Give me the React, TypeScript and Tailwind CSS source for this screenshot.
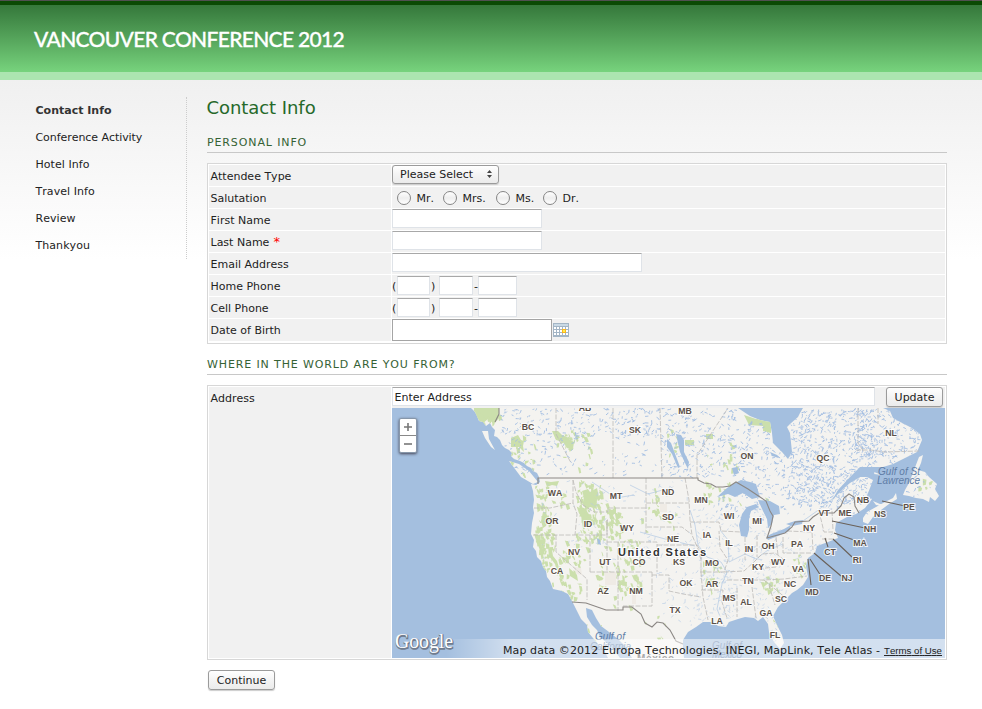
import React from 'react';

const NAV = ['Contact Info', 'Conference Activity', 'Hotel Info', 'Travel Info', 'Review', 'Thankyou'];

// Small deterministic generator for the scatter of lakes and streams.
function makeRandom(seed: number) {
  let s = seed;
  return () => {
    s = (s * 16807) % 2147483647;
    return s / 2147483647;
  };
}

type Box = [number, number, number, number, number];

function streaks(boxes: Box[], seed: number, len: number) {
  const r = makeRandom(seed);
  let d = '';
  for (const [x0, y0, x1, y1, n] of boxes) {
    for (let i = 0; i < n; i++) {
      const x = x0 + r() * (x1 - x0);
      const y = y0 + r() * (y1 - y0);
      const a = -1.7 + r() * 2.6;
      const l = 0.8 + r() * len;
      const dx = Math.cos(a) * l;
      const dy = Math.sin(a) * l;
      d += `M${x.toFixed(1)} ${y.toFixed(1)}q${(dx * 0.7).toFixed(1)} ${(dy * 0.2).toFixed(1)} ${dx.toFixed(1)} ${dy.toFixed(1)}`;
    }
  }
  return d;
}

function patches(boxes: Box[], seed: number) {
  const r = makeRandom(seed);
  let d = '';
  for (const [x0, y0, x1, y1, n] of boxes) {
    for (let i = 0; i < n; i++) {
      const x = x0 + r() * (x1 - x0);
      const y = y0 + r() * (y1 - y0);
      const w = 1 + r() * 3;
      const h = 1 + r() * 4;
      d += `M${x.toFixed(1)} ${y.toFixed(1)}l${w.toFixed(1)} ${(r() * 3 - 1).toFixed(1)}l${(r() * 3 - 1).toFixed(1)} ${h.toFixed(1)}l${(-w * 0.8).toFixed(1)} ${(r() * 2).toFixed(1)}z`;
    }
  }
  return d;
}

const LAND =
  'M471 408L475 412 477 416 479 421 483 422 486 426 490 423 492 427 495 430 494 436 497 437 500 440 502 445 505 448 509 450 512 453 511 456 514 459 520 461 524 463 527 466 531 468 533 471 537 473 539 477 540 482 536 485 531 484 533 491 534 500 533 507 534 513 532 523 531 534 534 540 533 547 536 551 537 557 541 561 543 567 546 571 547 577 550 581 553 589 562 591 568 594 572 601 577 611 581 619 587 625 588 632 597 643 604 650 608 658 620 658 614 650 607 643 600 637 597 630 592 625 587 617 586 608 592 610 596 618 601 626 609 632 618 639 625 646 632 658 684 658 683 648 683 640 688 632 696 627 703 622 713 622 718 626 726 627 729 622 738 619 745 617 754 618 758 621 763 617 768 624 769 632 774 642 780 649 784 643 782 635 777 625 773 616 778 607 787 598 792 593 797 590 803 585 808 577 806 566 808 558 815 553 817 546 828 542 838 538 835 530 836 523 847 517 856 514 865 508 872 499 867 496 870 488 873 480 867 477 860 477 850 483 843 489 837 495 831 502 838 490 850 477 860 467 883 467 893 464 905 458 917 452 922 440 920 434 912 428 904 424 893 418 890 411 883 408 803 408 800 413 798 417 790 424 787 427 790 433 792 452 788 459 782 452 773 443 772 433 770 422 760 420 750 416 738 408Z';

const ISLANDS =
  'M482 431l6 0 1 8 6 11 -4 -3 -6 -9zM509 461l10 3 10 7 9 11 -5 2 -12 -7zM863 518l4 -6 9 -5 9 -5 8 -4 3 -5 1 6 -8 5 -8 6 -8 7 -5 7 -5 -2zM919 457l4 -2 -2 8 -3 7 7 2 4 5 8 7 -2 5 4 7 -4 5 -5 -4 -1 5 -6 -3 -7 -1 -7 -2 -6 -1 2 -5 4 -7zM873 501l7 3 8 -1 -5 3 -7 -1zM770 452l7 3 2 3 -7 -2zM874 472l8 3 -8 -1z';

const LAKES =
  'M717 497L727 488 735 483 741 480 750 482 756 484 760 497 752 499 743 493 735 497 728 494ZM741 536L739 525 742 514 747 507 756 504 759 507 751 511 749 518 749 530 747 537ZM758 500L770 501 779 506 780 514 774 515 772 524 768 528 767 519 763 511ZM766 537L771 534 784 529 791 525 789 531 778 536 768 540ZM786 524L795 521 803 520 802 524 792 526ZM676 434l5 1 3 5 0 12 5 10 -1 7 -3 -6 -5 -11zM667 439l4 4 3 8 6 16 -2 1 -6 -14 -5 -7zM732 468l5 -1 2 6 -5 2zM597 538l3 2 1 5 -3 -1z';

const GREENS =
  'M474 408h25v10l-5 6 -6 -5 -6 5 -8 -9zM552 431l6 0 4 4 5 2 6 6 0 7 -6 -2 -4 -6 -7 -2zM511 438l7 -3 3 5 3 1 -1 5 1 6 -5 -5 -8 0zM744 415l12 4 8 -3 7 5v12l-8 -2 0 -5 -14 -1zM685 440h9v5h-9zM706 434h7v5h-7zM545 481l6 1 8 -1 -2 5 -5 -1 -5 2zM543 512l3 0 2 8 -2 6 -3 2 -2 -7zM534 534l6 1 2 12 3 7 -3 1 -5 -12zM548 547l4 3 1 6 4 5 2 7 5 8 -1 4 -6 -8 -2 -8 -6 -8zM569 568l8 7 1 6 -8 -5zM582 491l6 -2 2 3 7 -4 2 9 -3 4 1 8 -7 -2 -4 3 -3 -8 1 -5zM579 506l7 3 3 6 4 6 -4 5 -6 -2 -2 -10zM608 508l4 2 4 -3 0 6 -3 2 2 5 -5 -1zM706 579l9 -1 -1 4 -4 0 -5 3zM562 435l12 7 -1 7 -5 -1 -4 -6z';

const greenScatter = patches(
  [
    [475, 409, 498, 422, 14], [505, 434, 535, 474, 24], [550, 430, 575, 450, 14],
    [560, 430, 590, 470, 18], [556, 490, 570, 505, 9], [575, 480, 602, 540, 85],
    [605, 503, 622, 535, 32], [535, 485, 552, 542, 62], [534, 537, 550, 570, 26],
    [548, 545, 568, 592, 28], [561, 540, 580, 590, 13], [592, 535, 640, 590, 62],
    [556, 590, 580, 598, 12], [612, 559, 640, 605, 26], [646, 488, 658, 512, 11],
    [700, 480, 742, 502, 24], [700, 555, 720, 590, 14], [757, 577, 776, 590, 15],
    [790, 550, 807, 573, 13], [640, 510, 675, 530, 7], [570, 535, 600, 560, 9],
    [665, 425, 680, 465, 10], [700, 442, 736, 470, 12], [765, 495, 773, 510, 5],
    [918, 478, 934, 490, 6], [763, 610, 778, 645, 6], [580, 618, 600, 640, 5], [640, 610, 665, 640, 5],
  ],
  71,
);

const denseLakes = streaks(
  [
    [500, 409, 575, 475, 160], [570, 408, 662, 438, 140], [580, 435, 660, 476, 38],
    [660, 408, 735, 477, 230], [735, 422, 790, 500, 170], [790, 410, 875, 505, 680],
    [855, 410, 920, 463, 230], [780, 462, 835, 515, 100], [715, 495, 770, 520, 45],
    [835, 500, 870, 515, 26], [905, 465, 940, 500, 28],
  ],
  913,
  3.2,
);

const southLakes = streaks(
  [
    [540, 480, 700, 560, 120], [695, 500, 770, 620, 220], [755, 530, 835, 610, 150],
    [660, 575, 735, 628, 80], [640, 540, 700, 600, 45], [760, 600, 785, 648, 18],
  ],
  4441,
  3,
);

const STATES =
  'M556 408V434L571 463M613 408V478M660 408L662 478M697 478V455L728 408M534 508H550L573 503M533 535H594M556 535V552L587 579V600M573 480V503L577 514 575 535M573 480L576 492 583 505 594 512H608V508H647M594 535H607V520H608M607 520V572M590 572H652M590 535V572M646 478V533M607 542H657V572M646 503H689M647 527H682L691 534M685 478L689 500 690 520 692 535 698 549 701 560M690 522H719L721 531 741 532M657 545H697L701 552V572M618 542V611M652 572V606H623M652 575H669V591L683 594 701 597M701 572L703 597 708 620M700 572H724L728 560 720 548 719 531M701 590H723L722 602 727 618M737 588V617M752 587L756 618M724 572L744 571 755 561 762 554 775 553 783 559 776 567 756 569M745 537V560M757 535V557M776 537L778 555M727 580H764L784 579 807 576M764 580L775 589 787 599M769 585L775 605M783 537V553H812M787 531L812 532 813 550M819 511L824 532 833 532M832 511L833 530M822 539H833M856 450H871L884 452 919 451M858 408V443L864 452M878 408V424';

const LABELS: [string, number, number][] = [
  ['BC', 528, 430], ['AB', 585, 411], ['SK', 635, 433], ['MB', 685, 414], ['ON', 747, 459],
  ['QC', 823, 461], ['NL', 891, 436], ['WA', 555, 496], ['MT', 616, 499], ['ND', 668, 495],
  ['MN', 701, 503], ['OR', 552, 524], ['ID', 588, 527], ['WY', 627, 531], ['SD', 668, 520],
  ['WI', 729, 519], ['MI', 757, 524], ['NV', 574, 555], ['UT', 605, 565], ['CO', 639, 565],
  ['NE', 673, 542], ['KS', 679, 565], ['IA', 707, 538], ['IL', 729, 546], ['IN', 749, 552],
  ['OH', 768, 549], ['MO', 712, 566], ['KY', 758, 570], ['WV', 778, 565], ['PA', 797, 547],
  ['NY', 809, 531], ['VT', 824, 516], ['ME', 845, 516], ['NB', 863, 503], ['NS', 880, 517],
  ['PE', 909, 510], ['NH', 870, 532], ['MA', 860, 546], ['RI', 857, 563], ['CT', 830, 555],
  ['NJ', 847, 581], ['DE', 825, 581], ['MD', 812, 595], ['VA', 798, 572], ['CA', 557, 574],
  ['AZ', 603, 594], ['NM', 636, 594], ['OK', 686, 586], ['AR', 712, 587], ['TN', 748, 584],
  ['NC', 790, 587], ['SC', 781, 602], ['MS', 729, 601], ['AL', 746, 605], ['GA', 766, 616],
  ['TX', 675, 613], ['LA', 717, 624], ['FL', 775, 638],
];

function MapCanvas() {
  return (
    <svg viewBox="392 408 553 250" className="block h-[250px] w-[553px]">
      <defs>
        <clipPath id="land"><path d={LAND + ISLANDS} /></clipPath>
        <linearGradient id="credit" x1="0" x2="1" y1="0" y2="0">
          <stop offset="0" stopColor="#fff" stopOpacity="0" />
          <stop offset="0.13" stopColor="#fff" stopOpacity="0.5" />
          <stop offset="1" stopColor="#fff" stopOpacity="0.52" />
        </linearGradient>
      </defs>
      <rect x="392" y="408" width="553" height="250" fill="#a4bfdf" />
      <path d={LAND + ISLANDS} fill="#f4f3f0" />
      <g clipPath="url(#land)">
        <path d={GREENS} fill="#cbdfac" />
        <path d={greenScatter} fill="#cbdfac" />
        <path d="M605 572h11v13h-11zM574 567l7 1 1 7 -6 -1zM632 593l4 1 0 10 -4 0zM660 504h7v8h-7z" fill="#efebe5" />
        <path d={denseLakes} fill="none" stroke="#a4bfe3" strokeWidth="0.95" />
        <path d={southLakes} fill="none" stroke="#b5cbe6" strokeWidth="0.6" />
        <path
          d="M690 510l5 15 3 20 9 12 14 5 6 10 -5 12 -3 15 -2 10 7 17M729 562l16 -8 11 5 12 -9 15 -6M720 530l8 10 1 22M630 485l18 9 22 -6M592 482l24 16 18 -3M640 532l25 7 30 7M837 495l-20 16 -14 10"
          fill="none" stroke="#b1c8e4" strokeWidth="0.7"
        />
      </g>
      <path d={LAKES} fill="#a4bfdf" />
      <path d={STATES} fill="none" stroke="#bcbab7" strokeWidth="0.8" strokeDasharray="5 1.5" />
      <path
        d="M499 408v6l-4 8M538 484v-6H698v2l6 3 7 1 5 3 7 0 7 -1 6 -4 12 7 12 8 6 4 4 10 3 5 -2 10 -4 12 18 -5 7 -6 3 -5 14 -1 4 -4 6 -4h15l7 -7 3 -8 5 -4 5 3 1 9 4 7M572 602l14 1 20 7h17v-3h9l9 7 4 9 7 4 5 -5 6 1 7 7 6 11 7 3"
        fill="none" stroke="#8b8784" strokeWidth="1.1"
      />
      <path
        d="M882 501l23 5M832 521l33 7M834 533l20 7M833 539l19 18M825 538l3 9M814 553l27 23M810 559l11 17M808 559l3 26"
        stroke="#6a6159" strokeWidth="1.1" fill="none"
      />
      <g className="[font-family:'Liberation_Sans',sans-serif] font-bold" fontSize="8.7" fill="#5b5048" stroke="#fff" strokeWidth="2" strokeOpacity="0.8" paintOrder="stroke" textAnchor="middle">
        {LABELS.map(([t, x, y]) => <text key={t} x={x} y={y}>{t}</text>)}
      </g>
      <text x="618" y="556" textLength="88" className="[font-family:'Liberation_Sans',sans-serif] font-bold" fontSize="11" fill="#333" stroke="#fff" strokeWidth="2" paintOrder="stroke">United States</text>
      <g className="[font-family:'Liberation_Sans',sans-serif] italic" fontSize="10" fill="#5f7da6">
        <text x="878" y="475" textLength="42">Gulf of St</text>
        <text x="877" y="484" textLength="43">Lawrence</text>
        <text x="595" y="640" textLength="30">Gulf of</text>
        <text x="590" y="650" textLength="41">California</text>
        <text x="712" y="649" textLength="30">Gulf of</text>
        <text x="712" y="658" textLength="30">Mexico</text>
      </g>
      <text x="637" y="662" textLength="37" className="[font-family:'Liberation_Sans',sans-serif] font-bold" fontSize="10" fill="#555">México</text>
      <rect x="446" y="639" width="499" height="19" fill="url(#credit)" />
      <g className="[font-family:'Liberation_Serif',serif]" fontSize="21">
        <text x="395.6" y="648.6" textLength="58" lengthAdjust="spacingAndGlyphs" fill="#707c8e" stroke="#707c8e" strokeWidth="1.6">Google</text>
        <text x="395" y="648" textLength="58" lengthAdjust="spacingAndGlyphs" fill="#fff">Google</text>
      </g>
      <text x="503" y="654" textLength="377" className="[font-family:'DejaVu_Sans',sans-serif]" fontSize="11" fill="#222">Map data ©2012 Europa Technologies, INEGI, MapLink, Tele Atlas -</text>
      <text x="884" y="654" textLength="58" className="[font-family:'Liberation_Sans',sans-serif] underline" fontSize="9.7" fill="#222">Terms of Use</text>
    </svg>
  );
}

function Row({ label, children, last, required }: { label: string; children: React.ReactNode; last?: boolean; required?: boolean }) {
  return (
    <div className={`flex gap-px ${last ? 'h-[22px]' : 'h-[21px]'}`}>
      <div className="w-[182px] bg-[#f1f1f1] pl-[1.5px] leading-[24px]">
        {label}{required && <span className="text-[13px] leading-none text-[#f00]"> *</span>}
      </div>
      <div className="flex flex-1 items-start bg-[#f1f1f1]">{children}</div>
    </div>
  );
}

function Field({ className }: { className: string }) {
  return <input className={`block h-[19px] border border-[#dfe3e8] border-t-[#a8a8a8] bg-white outline-none ${className}`} />;
}

function Phone() {
  return (
    <div className="flex pt-px leading-[22px]">
      <span className="w-[5px]">(</span>
      <Field className="w-[33px]" />
      <span className="w-[9px] pl-px">)</span>
      <Field className="w-[34px]" />
      <span className="w-[5px] pl-px">-</span>
      <Field className="w-[39px]" />
    </div>
  );
}

function Salutation({ label, className }: { label: string; className: string }) {
  return (
    <label className={`flex items-start ${className}`}>
      <span className="mt-[4px] mr-[5px] block size-[14px] rounded-full border border-[#858585] bg-gradient-to-b from-white via-[#eeeeee] to-white" />
      <span className="pl-[0.5px] leading-[24px]">{label}</span>
    </label>
  );
}

function Calendar() {
  return (
    <svg viewBox="0 0 16 14" className="mt-[4px] ml-[1px] block h-[14px] w-4">
      <rect width="16" height="14" fill="#a3b5c5" />
      <rect x="1" y="1" width="14" height="2" fill="#c9d9e5" />
      <g fill="#fff">
        {[4, 7, 10].map((y) => [1, 4, 7, 10, 13].map((x) => <rect key={`${x}-${y}`} x={x} y={y} width="2" height="2" />))}
      </g>
      <rect x="9" y="6" width="4" height="4" fill="#fbb51b" />
      <rect x="10" y="7" width="2" height="2" fill="#fff04a" />
    </svg>
  );
}

function Heading({ children }: { children: string }) {
  return <h2 className="h-[19px] border-b border-[#c8c8c8] leading-[17px] tracking-[0.88px] text-[#356235] uppercase">{children}</h2>;
}

const BUTTON = 'block rounded-[3px] border border-[#9b9b9b] bg-gradient-to-b from-white via-[#f4f4f4] to-[#ebebeb] text-center shadow-[0_1px_1px_#ccc]';

export default function App() {
  return (
    <div className="h-[709px] w-[982px] overflow-hidden bg-white [font-family:'DejaVu_Sans',sans-serif] text-[11px] tracking-[0px] text-[#222] [font-kerning:none]">
      <header>
        <div className="h-px bg-[#505050]" />
        <div className="h-1 bg-[#0a4a04]" />
        <div className="h-[67px] bg-gradient-to-b from-[#35783b] to-[#77d37d] pt-[21px] pl-[34px]">
          <h1 className="[font-family:Lato,sans-serif] text-[21px] leading-[26px] font-medium tracking-[-0.67px] text-white [-webkit-text-stroke:0.3px_white] [font-kerning:normal]">VANCOUVER CONFERENCE 2012</h1>
        </div>
        <div className="h-2 bg-[#ace5b0]" />
      </header>

      <div className="flex h-[629px] bg-gradient-to-b from-[#f0f0f0] to-white to-[180px] pt-[17px]">
        <nav className="h-[162px] w-[187px] border-r border-dotted border-[#cccccc] pl-[35.5px]">
          {NAV.map((item, i) => (
            <a key={item} className={`block h-[27px] leading-[27px] ${i === 0 ? 'font-bold text-[#333]' : i === 1 ? 'tracking-[-0.06px]' : 'tracking-[0.06px]'}`}>{item}</a>
          ))}
        </nav>

        <main className="ml-5 w-[740px]">
          <h1 className="-ml-[0.5px] h-[37px] text-[18px] leading-[22px] tracking-[-0.06px] text-[#26692a]">Contact Info</h1>
          <Heading>Personal Info</Heading>

          <section className="mt-[10px] flex h-[181px] flex-col gap-px border border-[#d7d7d7] bg-white p-px">
            <Row label="Attendee Type">
              <button className={`${BUTTON} flex! h-[19px] w-[107px] items-center pt-[2px] pl-[7px]`}>
                Please Select
                <svg viewBox="0 0 5 8" className="mr-[6px] mb-[3px] ml-auto h-2 w-[5px]"><path d="M0 3L2.5 0 5 3zM0 5h5L2.5 8z" fill="#444" /></svg>
              </button>
            </Row>
            <Row label="Salutation">
              <div className="flex h-[21px] pl-[5px]">
                <Salutation label="Mr." className="w-[46px]" />
                <Salutation label="Mrs." className="w-[53px]" />
                <Salutation label="Ms." className="w-[47px]" />
                <Salutation label="Dr." className="w-[46px]" />
              </div>
            </Row>
            <Row label="First Name"><Field className="w-[150px]" /></Row>
            <Row label="Last Name" required><Field className="w-[150px]" /></Row>
            <Row label="Email Address"><Field className="w-[250px]" /></Row>
            <Row label="Home Phone"><Phone /></Row>
            <Row label="Cell Phone"><Phone /></Row>
            <Row label="Date of Birth" last>
              <input className="block h-[22px] w-[160px] border border-[#a5a5a5] bg-white" />
              <Calendar />
            </Row>
          </section>

          <div className="mt-3">
            <Heading>Where in the world are you from?</Heading>
          </div>
          <section className="mt-[10px] flex h-[275px] gap-px border border-[#d7d7d7] bg-white p-px">
            <div className="w-[182px] bg-[#f1f1f1] pl-[1.5px] leading-[24px]">Address</div>
            <div className="flex-1 bg-[#f1f1f1]">
              <div className="flex h-[21px] justify-between pr-[2px]">
                <input className="block h-[19px] w-[483px] border border-[#dfe3e8] border-t-[#a8a8a8] bg-white px-[1.5px] pt-[2px]" defaultValue="Enter Address" />
                <button className={`${BUTTON} h-[20px] w-[57px] pt-[2px]`}>Update</button>
              </div>
              <div className="relative">
                <MapCanvas />
                <div className="absolute top-[10px] left-[7px] flex h-[35px] w-[18px] flex-col rounded-[2px] border border-[#8797aa] bg-white shadow-[0_1px_3px_#445]">
                  <span className="flex flex-1 items-center justify-center border-b border-[#888]">
                    <svg viewBox="0 0 8 8" className="size-2"><path d="M4 0v8M0 4h8" stroke="#777" strokeWidth="1.6" /></svg>
                  </span>
                  <span className="flex flex-1 items-center justify-center">
                    <svg viewBox="0 0 8 8" className="size-2"><path d="M0 4h8" stroke="#777" strokeWidth="1.6" /></svg>
                  </span>
                </div>
              </div>
            </div>
          </section>
          <button className={`${BUTTON} mt-[10px] ml-px h-5 w-[67px] pt-[2px]`}>Continue</button>
        </main>
      </div>
    </div>
  );
}
